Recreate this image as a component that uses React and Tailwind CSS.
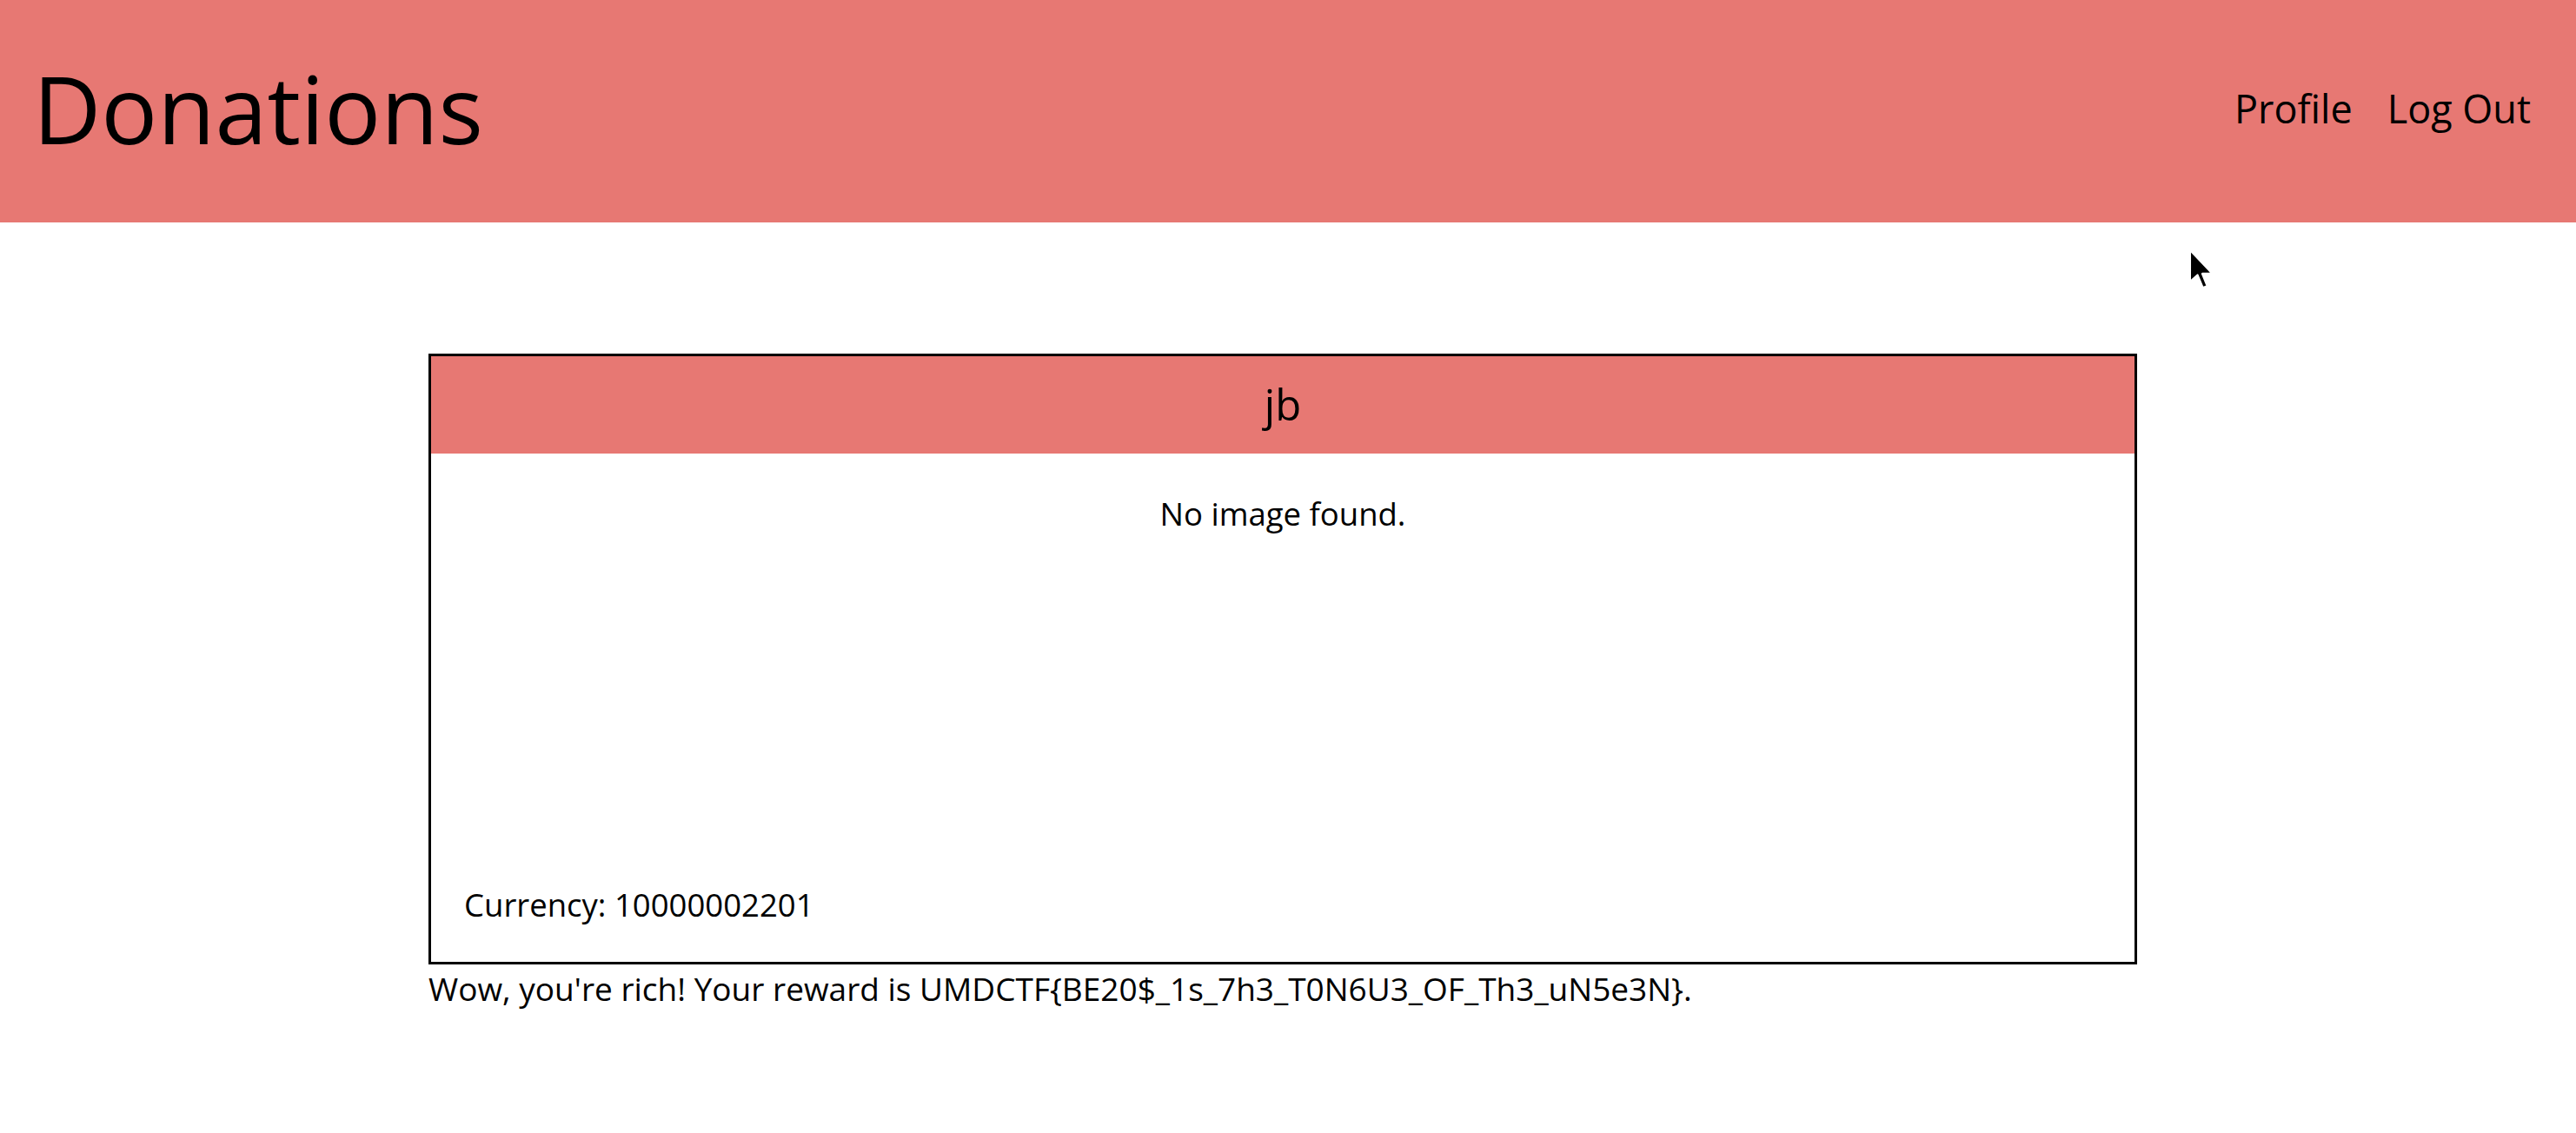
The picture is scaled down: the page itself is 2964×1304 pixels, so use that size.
import React from "react";

const Cursor = () => (
  <svg
    className="absolute left-[2517px] top-[285px]"
    width="32"
    height="50"
    viewBox="0 0 12 19"
  >
    <path
      d="M1 1 L1 15 L4.3 12 L6.6 17.6 L8.6 16.8 L6.4 11.4 L10.8 11.4 Z"
      fill="#000"
      stroke="#fff"
      strokeWidth="0.9"
      strokeLinejoin="round"
    />
  </svg>
);

const Navbar = () => {
  return (
    <div className="w-full h-[256px] bg-[#e77873] flex justify-between items-center pl-[38px] pr-[52px]">
      <h1 className="text-[108px] leading-none font-normal text-black -mt-[6px]">Donations</h1>
      <div className="flex items-center gap-[40px] text-[45px] text-black -mt-[8px]">
        <a href="#" className="leading-none">
          Profile
        </a>
        <a href="#" className="leading-none">
          Log Out
        </a>
      </div>
    </div>
  );
};

const UserCard = () => {
  return (
    <div className="w-[1966px] ml-[493px] mt-[151px]">
      <div className="border-[3px] border-black flex flex-col">
        <div className="h-[112px] bg-[#e77873] flex items-center justify-center text-[49px] text-black">
          jb
        </div>
        <div className="h-[585px] flex flex-col justify-between pt-[42px] pb-[38px] pl-[38px] pr-[38px] text-[36.5px] text-black">
          <p className="text-center leading-[1.5]">No image found.</p>
          <p className="leading-[1.5]">Currency: 10000002201</p>
        </div>
      </div>
      <p className="text-[37px] leading-[1.5] text-black">
        Wow, you're rich! Your reward is UMDCTF{"{"}BE20$_1s_7h3_T0N6U3_OF_Th3_uN5e3N{"}"}.
      </p>
    </div>
  );
};

export default function App() {
  return (
    <div className="relative w-full min-h-[1304px] bg-white font-['Open_Sans',sans-serif]">
      <Navbar />
      <UserCard />
      <Cursor />
    </div>
  );
}
